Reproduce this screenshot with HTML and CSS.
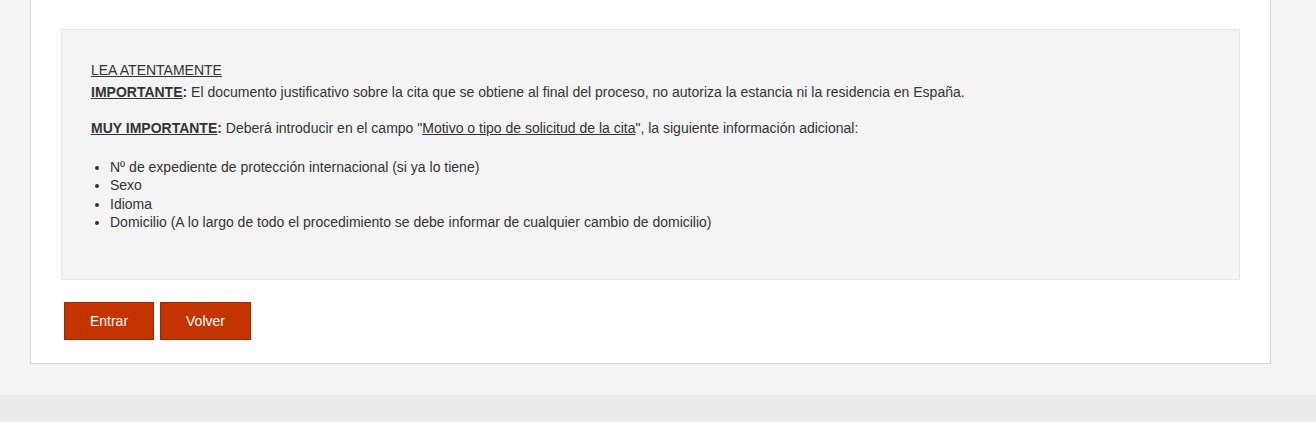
FILE: index.html
```html
<!DOCTYPE html>
<html lang="es">
<head>
<meta charset="utf-8">
<title>Cita previa</title>
<link rel="stylesheet" href="styles.css">
</head>
<body>
<div class="page">
  <div class="panel">
    <div class="notice">
      <div class="notice-title"><a href="#" class="link">LEA ATENTAMENTE</a></div>
      <p class="line"><strong><u>IMPORTANTE</u>:</strong> El documento justificativo sobre la cita que se obtiene al final del proceso, no autoriza la estancia ni la residencia en España.</p>
      <p class="line spaced"><strong><u>MUY IMPORTANTE</u>:</strong> Deberá introducir en el campo "<u>Motivo o tipo de solicitud de la cita</u>", la siguiente información adicional:</p>
      <ul class="list">
        <li>Nº de expediente de protección internacional (si ya lo tiene)</li>
        <li>Sexo</li>
        <li>Idioma</li>
        <li>Domicilio (A lo largo de todo el procedimiento se debe informar de cualquier cambio de domicilio)</li>
      </ul>
    </div>
    <div class="actions">
      <button class="btn btn-enter" type="button">Entrar</button>
      <button class="btn btn-back" type="button">Volver</button>
    </div>
  </div>
</div>
<footer class="footer"></footer>
</body>
</html>
```

FILE: styles.css
```css
html, body {
  margin: 0;
  padding: 0;
}
body {
  background: #f5f5f5;
  font-family: "Liberation Sans", Arial, sans-serif;
  font-size: 14px;
  color: #333333;
}
.page {
  padding: 0 45px 31px 30px;
}
.panel {
  background: #ffffff;
  border: 1px solid #d8d8d8;
  border-top: none;
  padding: 29px 30px 23px 30px;
}
.notice {
  background: #f4f4f4;
  border: 1px solid #e7e7e7;
  padding: 31px 29px 30px 29px;
}
.notice-title {
  line-height: 18px;
  margin-bottom: 4px;
}
.link {
  color: #333333;
  text-decoration: underline;
}
.line {
  margin: 0;
  line-height: 18px;
}
.spaced {
  margin-top: 18px;
}
.list {
  margin: 21px 0 17px 0;
  padding-left: 19px;
  line-height: 18.4px;
}
.actions {
  display: flex;
  gap: 6px;
  margin-top: 22px;
  padding-left: 3px;
}
.btn {
  background: #c43400;
  border: 1px solid #9c2900;
  color: #ffffff;
  font-family: "Liberation Sans", Arial, sans-serif;
  font-size: 14px;
  height: 38px;
  padding: 0 24px;
  border-radius: 0;
  cursor: pointer;
}
.btn-enter {
  width: 90px;
}
.btn-back {
  width: 91px;
}
.footer {
  background: #ebebeb;
  height: 40px;
}
```
